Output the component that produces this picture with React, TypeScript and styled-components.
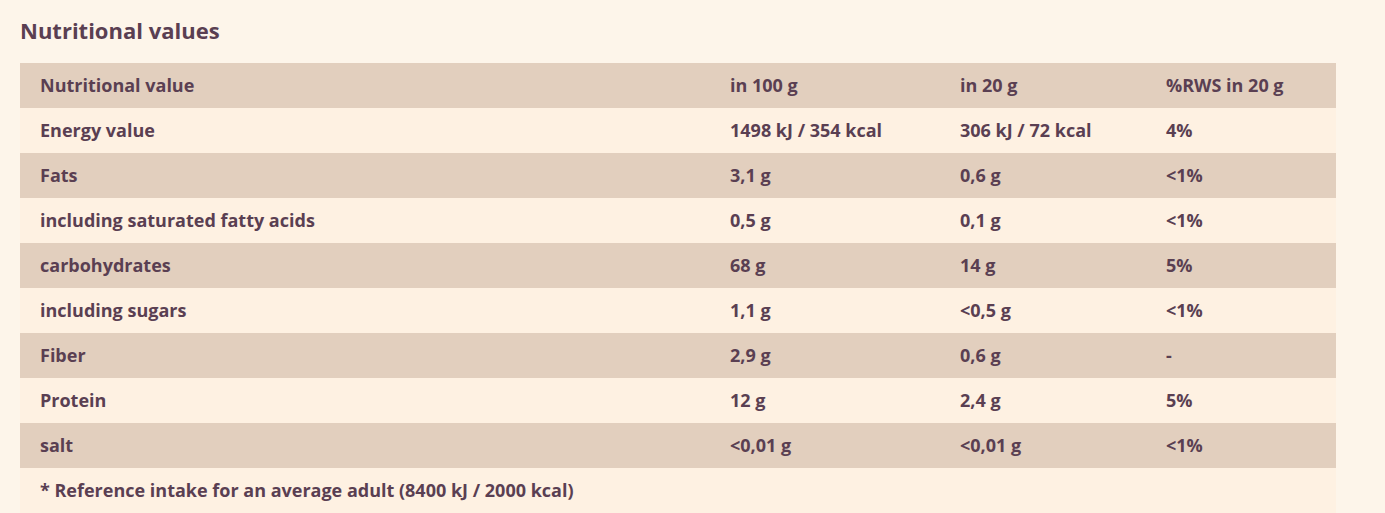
import React from 'react';
import styled, { createGlobalStyle } from 'styled-components';

const GlobalStyle = createGlobalStyle`
  html, body {
    margin: 0;
    padding: 0;
    background: #fdf5ea;
  }
  body {
    font-family: "Open Sans", "Liberation Sans", sans-serif;
    color: #5a3f52;
  }
`;

const Section = styled.section`
  padding: 15px 49px 0 20px;
`;

const Title = styled.h2`
  margin: 0 0 18px;
  font-size: 22px;
  line-height: 30px;
  font-weight: 700;
  color: #5a3f52;
`;

const Table = styled.table`
  width: 100%;
  border-collapse: collapse;
  table-layout: fixed;
`;

const Row = styled.tr<{ $shade: boolean }>`
  background: ${p => (p.$shade ? '#e2cfbe' : '#fef1e2')};
`;

const Cell = styled.td`
  padding: 10px 20px 11px;
  line-height: 24px;
  font-size: 18px;
  font-weight: 700;
  color: #5a3f52;
  vertical-align: middle;
  white-space: nowrap;
`;

const HeadCell = styled(Cell).attrs({ as: 'th' })`
  text-align: left;
`;

const header = ['Nutritional value', 'in 100 g', 'in 20 g', '%RWS in 20 g'];

const rows: string[][] = [
  ['Energy value', '1498 kJ / 354 kcal', '306 kJ / 72 kcal', '4%'],
  ['Fats', '3,1 g', '0,6 g', '<1%'],
  ['including saturated fatty acids', '0,5 g', '0,1 g', '<1%'],
  ['carbohydrates', '68 g', '14 g', '5%'],
  ['including sugars', '1,1 g', '<0,5 g', '<1%'],
  ['Fiber', '2,9 g', '0,6 g', '-'],
  ['Protein', '12 g', '2,4 g', '5%'],
  ['salt', '<0,01 g', '<0,01 g', '<1%'],
];

const widths = ['690px', '230px', '206px', 'auto'];

export default function App() {
  return (
    <>
      <GlobalStyle />
      <Section>
        <Title>Nutritional values</Title>
        <Table>
          <colgroup>
            {widths.map((w, i) => (
              <col key={i} style={{ width: w }} />
            ))}
          </colgroup>
          <thead>
            <Row $shade>
              {header.map(h => (
                <HeadCell key={h}>{h}</HeadCell>
              ))}
            </Row>
          </thead>
          <tbody>
            {rows.map((r, i) => (
              <Row key={r[0]} $shade={i % 2 === 1}>
                {r.map((c, j) => (
                  <Cell key={j}>{c}</Cell>
                ))}
              </Row>
            ))}
            <Row $shade={false}>
              <Cell colSpan={4}>* Reference intake for an average adult (8400 kJ / 2000 kcal)</Cell>
            </Row>
          </tbody>
        </Table>
      </Section>
    </>
  );
}
